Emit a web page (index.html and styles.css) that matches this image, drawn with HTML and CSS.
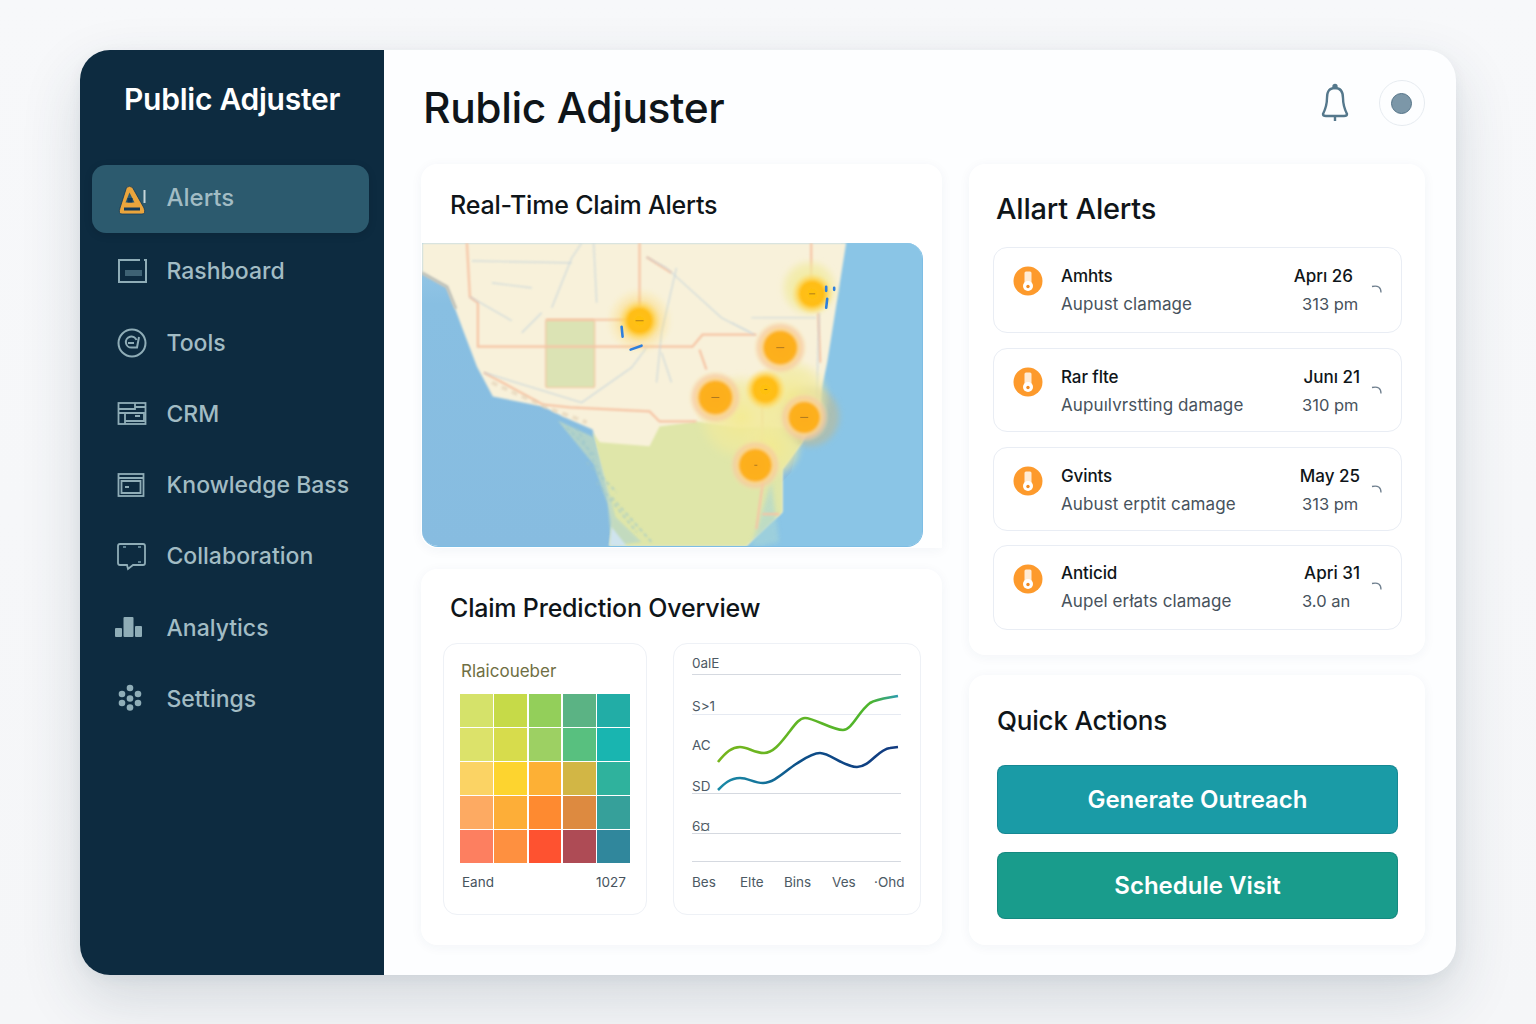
FILE: index.html
```html
<!DOCTYPE html>
<html lang="en">
<head>
<meta charset="utf-8">
<title>Public Adjuster</title>
<link rel="stylesheet" href="styles.css">
</head>
<body>
<div class="app">
  <aside class="sidebar">
    <div class="brand">Public Adjuster</div>
    <nav class="nav">
      <a class="nav-item active">
        <svg class="nav-icon icon-alert" viewBox="0 0 30 30" fill="none"><path d="M9.500 2.500 Q12.500 0 15.500 2.500 L27 23 Q29 29 25 29 H5 Q1 29 3 23 Z" fill="#eaa53c" stroke="#123a5a" stroke-width=".8"/><path d="M12.500 7.500 L17.500 17.500 H8.500 Z" fill="#2c5a6e"/><rect x="10.500" y="13" width="5" height="4.500" fill="#123a5a"/><rect x="7" y="22.500" width="16" height="3" fill="#123a5a"/><path d="M27.500 5 V18" stroke="#c6d6da" stroke-width="2"/></svg>
        <span class="nav-label-active">Alerts</span>
      </a>
      <a class="nav-item">
        <svg class="nav-icon" viewBox="0 0 30 30" fill="none" stroke="#8fadb7" stroke-width="2"><path d="M23 4 H2 V26 H29 V4 H27"/><rect x="8" y="14" width="17" height="6" fill="#3e6274" stroke="none"/></svg>
        <span>Rashboard</span>
      </a>
      <a class="nav-item">
        <svg class="nav-icon" viewBox="0 0 30 30" fill="none" stroke="#8fadb7" stroke-width="2"><circle cx="15" cy="15" r="13.500"/><path d="M22 9 L20 19.500 H14.500 A5.500 5.500 0 1 1 19.500 12"/><path d="M11 15 H17"/></svg>
        <span>Tools</span>
      </a>
      <a class="nav-item">
        <svg class="nav-icon" viewBox="0 0 30 30" fill="none" stroke="#8fadb7" stroke-width="1.800"><rect x="1.500" y="4" width="27" height="21"/><path d="M1.500 10 H18 V4 M18 8 H28.500 M1.500 14 H8 M8 25 V14 H27 V22 H8 M18 17 h5"/></svg>
        <span>CRM</span>
      </a>
      <a class="nav-item">
        <svg class="nav-icon" viewBox="0 0 30 30" fill="none" stroke="#8fadb7" stroke-width="1.800"><rect x="1.500" y="4" width="25" height="22"/><path d="M1.500 8 H26.500 M4.500 11 H23.500 V23 H4.500 Z"/><path d="M8 17 h4" stroke-width="2"/></svg>
        <span>Knowledge Bass</span>
      </a>
      <a class="nav-item">
        <svg class="nav-icon" viewBox="0 0 30 30" fill="none" stroke="#8fadb7" stroke-width="1.800"><path d="M3 3 H26 Q28 3 28 5 V22 Q28 24 26 24 H16 L11 28 L10 24 H3 Q1 24 1 22 V5 Q1 3 3 3 Z"/><path d="M6 6 h3 M21 6 h3 M21 21 h3" stroke="#5d8090"/></svg>
        <span>Collaboration</span>
      </a>
      <a class="nav-item">
        <svg class="nav-icon icon-shift" viewBox="0 0 30 30" fill="#8fadb7"><rect x="0" y="15" width="7" height="9" rx="1"/><rect x="8.500" y="4" width="10" height="20" rx="1"/><rect x="20" y="13" width="7" height="11" rx="1"/></svg>
        <span>Analytics</span>
      </a>
      <a class="nav-item">
        <svg class="nav-icon" viewBox="0 0 30 30" fill="#8fadb7"><circle cx="13" cy="4" r="3.300"/><circle cx="5" cy="10" r="3.300"/><circle cx="21" cy="10" r="3.300"/><circle cx="13" cy="14.500" r="3.300"/><circle cx="5" cy="19" r="3.300"/><circle cx="21" cy="19" r="3.300"/><circle cx="13" cy="23.500" r="3.300"/></svg>
        <span>Settings</span>
      </a>
    </nav>
  </aside>

  <main class="main">
    <header class="topbar">
      <h1 class="page-title">Rublic Adjuster</h1>
      <div class="top-actions">
        <svg class="bell" viewBox="0 0 30 40" fill="none" stroke="#55788c" stroke-width="2.400" stroke-linejoin="round"><path d="M15 5 C8 5 7 10 7 15 C7 22 5 27 3 31 Q3 33 6 33 H24 Q27 33 27 31 C25 27 23 22 23 15 C23 10 22 5 15 5 Z"/><circle cx="15" cy="3.500" r="1.500" fill="#55788c"/><path d="M15 33 V38"/></svg>
        <div class="avatar"><span class="avatar-dot"></span></div>
      </div>
    </header>

    <div class="columns">
      <div class="col col-left">
        <section class="card map-card">
          <h2 class="card-title">Real-Time Claim Alerts</h2>
          <div class="map">
            <svg viewBox="0 0 501 304" preserveAspectRatio="none">
              <defs>
                <radialGradient id="hotA"><stop offset="0" stop-color="#ffc20e"/><stop offset=".55" stop-color="#ffbd16"/><stop offset=".72" stop-color="#ffd04a" stop-opacity=".75"/><stop offset="1" stop-color="#ffe27a" stop-opacity="0"/></radialGradient>
                <radialGradient id="hotB"><stop offset="0" stop-color="#fdae1b"/><stop offset=".58" stop-color="#fdb020"/><stop offset=".68" stop-color="#fbd58e" stop-opacity=".9"/><stop offset=".82" stop-color="#f7c9a0" stop-opacity=".7"/><stop offset="1" stop-color="#f6e2a0" stop-opacity="0"/></radialGradient>
                <radialGradient id="glow"><stop offset="0" stop-color="#f3ea90" stop-opacity=".95"/><stop offset=".7" stop-color="#f1ea9c" stop-opacity=".65"/><stop offset="1" stop-color="#f1ea9c" stop-opacity="0"/></radialGradient>
                <linearGradient id="sea" x1="0" x2="0" y1="0" y2="1"><stop offset="0" stop-color="#9ccbe8"/><stop offset=".2" stop-color="#88bfe2"/><stop offset="1" stop-color="#87bce0"/></linearGradient>
                <filter id="soft" x="-10%" y="-10%" width="120%" height="120%"><feGaussianBlur stdDeviation="1"/></filter>
                <filter id="softmid" x="-10%" y="-10%" width="120%" height="120%"><feGaussianBlur stdDeviation="2"/></filter>
                <filter id="softer" x="-20%" y="-20%" width="140%" height="140%"><feGaussianBlur stdDeviation="3"/></filter>
                <filter id="hot" x="-20%" y="-20%" width="140%" height="140%"><feGaussianBlur stdDeviation=".9"/></filter>
              </defs>
              <rect width="501" height="304" fill="url(#sea)"/>
              <path d="M300 304 L370 230 L420 0 H501 V304 Z" fill="#8ac5e6"/>
              <path d="M0 0 H425 L406 120 L401 144 L398 174 L381 200 L361 227 L361 270 L325 304 H188 L191 280 L185 247 L171 187 L141 174 L121 164 L71 154 L55 124 L41 87 L25 44 L0 30 Z" fill="#f8f1da" filter="url(#soft)"/>
              <path d="M0 30 L25 44 L34 66" fill="none" stroke="#c4c3b8" stroke-width="3" filter="url(#soft)"/>
              <path d="M171 190 L178 200 L228 204 L238 184 L275 179 L315 185 L380 185 L381 200 L361 227 L361 270 L325 304 H188 L191 280 L185 247 Z" fill="#dfe6a9" filter="url(#soft)"/>
              <path d="M350 240 L358 300 L340 304 L330 304 Z" fill="#a9d6d6" opacity=".6" filter="url(#softmid)"/>
              <path d="M136 178 L172 195 L186 245 L194 275 L220 300 L190 304 L186 262 L172 222 Z" fill="#bcd8c4" opacity=".8" filter="url(#soft)"/>
              <path d="M145 185 L175 215 M155 185 L180 235 M165 220 L195 250 M175 240 L215 290 M190 255 L230 300" fill="none" stroke="#98c4cc" stroke-width="2" stroke-dasharray="4 3" opacity=".6" filter="url(#soft)"/>
              <path d="M190 285 L188 304 H205 Z" fill="#cfe4ee" filter="url(#soft)"/>
              <rect x="124" y="77" width="49" height="68" rx="2" fill="#dbe3b4" stroke="#f4c4a0" stroke-width="1.200" filter="url(#soft)"/>
              <g fill="none" stroke="#f6c4a4" stroke-width="2.200" filter="url(#soft)">
                <path d="M45 0 L48 54 L56 60 L56 104 H271 L281 92 H335"/>
                <path d="M218 0 V64"/>
                <path d="M124 77 H218"/>
                <path d="M62 130 L121 162 L148 165 L228 169 L238 179 H275"/>
                <path d="M278 107 L285 127"/>
                <path d="M341 164 L341 204 L341 244 L335 287"/>
                <path d="M390 0 V37"/>
                <path d="M225 14 L250 30"/>
                <path d="M397 70 L399 120 M341 272 H358"/>
              </g>
              <g fill="none" stroke="#c4d3dc" stroke-width="1.200" opacity=".85" filter="url(#soft)">
                <path d="M225 14 L245 25 L300 75 L333 92"/>
                <path d="M130 65 L150 15 L160 0 M48 54 L90 78 M50 18 L150 20 M70 40 L110 45"/>
                <path d="M62 130 L160 160 L210 125 L225 105"/>
                <path d="M172 0 L175 60 M255 25 L240 90 L235 140 M330 75 H395 M398 70 L395 170"/>
                <path d="M240 110 L250 140 M310 80 L330 90 M100 90 L120 70"/>
              </g>
              <path d="M70 140 L125 165 L165 180" fill="none" stroke="#e0ccb0" stroke-width="4" stroke-dasharray="6 5" opacity=".55" filter="url(#soft)"/>
              <circle cx="388" cy="174" r="30" fill="#c4b98c" opacity=".55" filter="url(#softer)"/>
              <g filter="url(#softmid)">
                <circle cx="320" cy="175" r="45" fill="url(#glow)"/>
                <circle cx="370" cy="155" r="40" fill="url(#glow)"/>
                <circle cx="350" cy="205" r="32" fill="url(#glow)"/>
                <circle cx="388" cy="45" r="30" fill="url(#glow)"/>
              </g>
              <g filter="url(#hot)">
                <circle cx="218" cy="78" r="34" fill="url(#hotA)" opacity=".28"/>
                <circle cx="218" cy="78" r="21" fill="url(#hotA)"/>
                <circle cx="391" cy="51" r="21" fill="url(#hotA)"/>
                <circle cx="344" cy="147" r="21" fill="url(#hotA)"/>
                <circle cx="359" cy="105" r="27" fill="url(#hotB)"/>
                <circle cx="294" cy="155" r="27" fill="url(#hotB)"/>
                <circle cx="383" cy="175" r="25" fill="url(#hotB)"/>
                <circle cx="334" cy="223" r="26" fill="url(#hotB)"/>
              </g>
              <g stroke="#2e7fdc" stroke-width="2.600" stroke-linecap="round">
                <path d="M200 84 L201 94 M209 107 L220 103"/>
                <path d="M405 44 V48 M413 45 V47 M406 56 L405 65"/>
              </g>
              <g stroke="#9a6a20" stroke-width="1" opacity=".8">
                <path d="M214 78 H222 M355 105 H363 M290 155 H298 M379 175 H387 M388 51 H394 M343 147 H346 M333 223 H336"/>
              </g>
            </svg>
          </div>
        </section>

        <section class="card overview-card">
          <h2 class="card-title">Claim Prediction Overview</h2>
          <div class="overview-grid">
            <div class="subcard heat-card">
              <div class="heat-title">Rlaicoueber</div>
              <div class="heat">
                <i class="h11"></i><i class="h12"></i><i class="h13"></i><i class="h14"></i><i class="h15"></i>
                <i class="h21"></i><i class="h22"></i><i class="h23"></i><i class="h24"></i><i class="h25"></i>
                <i class="h31"></i><i class="h32"></i><i class="h33"></i><i class="h34"></i><i class="h35"></i>
                <i class="h41"></i><i class="h42"></i><i class="h43"></i><i class="h44"></i><i class="h45"></i>
                <i class="h51"></i><i class="h52"></i><i class="h53"></i><i class="h54"></i><i class="h55"></i>
              </div>
              <div class="heat-foot"><span>Eand</span><span>1027</span></div>
            </div>
            <div class="subcard chart-card">
              <svg class="chart" viewBox="0 0 246 269">
                <defs>
                  <linearGradient id="lineG" x1="0" x2="1" y1="0" y2="0"><stop offset="0" stop-color="#76b51c"/><stop offset=".85" stop-color="#4db52d"/><stop offset="1" stop-color="#2a9bb0"/></linearGradient>
                  <linearGradient id="lineB" x1="0" x2="1" y1="0" y2="0"><stop offset="0" stop-color="#1a8aa6"/><stop offset=".25" stop-color="#14739a"/><stop offset=".45" stop-color="#0c4f88"/><stop offset="1" stop-color="#123a80"/></linearGradient>
                </defs>
                <g class="grid-lines">
                  <path d="M18 30.500 H227"/><path d="M18 70.500 H227" class="faint"/><path d="M18 149.500 H227"/><path d="M18 189.500 H227"/><path d="M18 217.500 H227"/>
                </g>
                <g class="chart-label">
                  <text x="18" y="24">0alE</text>
                  <text x="18" y="67">S&gt;1</text>
                  <text x="18" y="106">AC</text>
                  <text x="18" y="147">SD</text>
                  <text x="18" y="187">6¤</text>
                  <text x="18" y="243">Bes</text>
                  <text x="66" y="243">Elte</text>
                  <text x="110" y="243">Bins</text>
                  <text x="158" y="243">Ves</text>
                  <text x="200" y="243">·Ohd</text>
                </g>
                <path d="M44 118 C52 108 58 103 66 103 C74 103 80 109 90 109 C100 109 108 97 116 87 C122 79 126 74 131 74 C140 74 158 86 169 86 C178 86 184 68 196 59 C203 55 214 54 224 52" fill="none" stroke="url(#lineG)" stroke-width="2.600"/>
                <path d="M44 146 C50 140 56 134 66 134 C74 134 80 139 89 139 C100 139 110 128 122 120 C130 115 138 109 146 109 C156 109 170 123 183 123 C196 123 204 105 216 104 L224 103" fill="none" stroke="url(#lineB)" stroke-width="2.600"/>
              </svg>
            </div>
          </div>
        </section>
      </div>

      <div class="col col-right">
        <section class="card alerts-card">
          <h2 class="card-title title-lg">Allart Alerts</h2>
          <ul class="alert-list">
            <li class="alert alert-a">
              <svg class="alert-icon" viewBox="0 0 30 30"><circle cx="15" cy="15" r="14.500" fill="#fd9a2c"/><path d="M11.500 7 Q11.500 5.500 13 5.500 H17 Q18.500 5.500 18.500 7 V17 H11.500 Z" fill="#fff" opacity=".8"/><circle cx="15" cy="20" r="5" fill="#fff"/><circle cx="15" cy="20.500" r="1.700" fill="#f08a20"/></svg>
              <div class="alert-body"><div class="alert-name">Amhts</div><div class="alert-sub">Aupust clamage</div></div>
              <div class="alert-when"><div class="alert-date date-first">Aprı 26</div><div class="alert-time">313 pm</div></div>
              <svg class="alert-chev" viewBox="0 0 12 12" fill="none" stroke="#6f7f8e" stroke-width="1.300"><path d="M1 2.500 Q10 0.500 10 8.500"/></svg>
            </li>
            <li class="alert">
              <svg class="alert-icon" viewBox="0 0 30 30"><circle cx="15" cy="15" r="14.500" fill="#fd9a2c"/><path d="M11.500 7 Q11.500 5.500 13 5.500 H17 Q18.500 5.500 18.500 7 V17 H11.500 Z" fill="#fff" opacity=".8"/><circle cx="15" cy="20" r="5" fill="#fff"/><circle cx="15" cy="20.500" r="1.700" fill="#f08a20"/></svg>
              <div class="alert-body"><div class="alert-name">Rar flte</div><div class="alert-sub">Aupuılvrstting damage</div></div>
              <div class="alert-when"><div class="alert-date">Junı 21</div><div class="alert-time">310 pm</div></div>
              <svg class="alert-chev" viewBox="0 0 12 12" fill="none" stroke="#6f7f8e" stroke-width="1.300"><path d="M1 2.500 Q10 0.500 10 8.500"/></svg>
            </li>
            <li class="alert">
              <svg class="alert-icon" viewBox="0 0 30 30"><circle cx="15" cy="15" r="14.500" fill="#fd9a2c"/><path d="M11.500 7 Q11.500 5.500 13 5.500 H17 Q18.500 5.500 18.500 7 V17 H11.500 Z" fill="#fff" opacity=".8"/><circle cx="15" cy="20" r="5" fill="#fff"/><circle cx="15" cy="20.500" r="1.700" fill="#f08a20"/></svg>
              <div class="alert-body"><div class="alert-name">Gvints</div><div class="alert-sub">Aubust erptit camage</div></div>
              <div class="alert-when"><div class="alert-date">May 25</div><div class="alert-time">313 pm</div></div>
              <svg class="alert-chev" viewBox="0 0 12 12" fill="none" stroke="#6f7f8e" stroke-width="1.300"><path d="M1 2.500 Q10 0.500 10 8.500"/></svg>
            </li>
            <li class="alert alert-d">
              <svg class="alert-icon" viewBox="0 0 30 30"><circle cx="15" cy="15" r="14.500" fill="#fd9a2c"/><path d="M11.500 7 Q11.500 5.500 13 5.500 H17 Q18.500 5.500 18.500 7 V17 H11.500 Z" fill="#fff" opacity=".8"/><circle cx="15" cy="20" r="5" fill="#fff"/><circle cx="15" cy="20.500" r="1.700" fill="#f08a20"/></svg>
              <div class="alert-body"><div class="alert-name">Anticid</div><div class="alert-sub">Aupel erłats clamage</div></div>
              <div class="alert-when"><div class="alert-date">Apri 31</div><div class="alert-time">3.0 an</div></div>
              <svg class="alert-chev" viewBox="0 0 12 12" fill="none" stroke="#6f7f8e" stroke-width="1.300"><path d="M1 2.500 Q10 0.500 10 8.500"/></svg>
            </li>
          </ul>
        </section>

        <section class="card actions-card">
          <h2 class="card-title title-md">Quick Actions</h2>
          <button class="btn btn-blue">Generate Outreach</button>
          <button class="btn btn-green">Schedule Visit</button>
        </section>
      </div>
    </div>
  </main>
</div>
</body>
</html>
```

FILE: styles.css
```css
* { box-sizing: border-box; }
html, body { margin: 0; height: 100%; }
body {
  width: 1536px;
  height: 1024px;
  overflow: hidden;
  padding: 50px 80px 49px;
  background: linear-gradient(180deg, #f7f8fa 0%, #f5f6f8 100%);
  font-family: Inter, "Liberation Sans", sans-serif;
  color: #10181f;
}
.app {
  display: flex;
  width: 1376px;
  height: 925px;
  border-radius: 30px;
  background: #fdfeff;
  box-shadow: 0 24px 60px rgba(40, 60, 80, .16), 0 4px 14px rgba(40, 60, 80, .06);
  overflow: hidden;
}

/* Sidebar */
.sidebar {
  flex: 0 0 304px;
  background: #0d2b40;
  padding: 0 15px 0 12px;
}
.brand {
  height: 98px;
  margin-bottom: 17px;
  padding-left: 32px;
  display: flex;
  align-items: center;
  color: #fff;
  font-size: 30px;
  font-weight: 600;
  letter-spacing: -.25px;
}
.nav { display: flex; flex-direction: column; gap: 3.300px; }
.nav-item {
  display: flex;
  align-items: center;
  gap: 19.500px;
  height: 68px;
  padding-left: 25px;
  padding-bottom: 4px;
  border-radius: 14px;
  color: #a2bcc4;
  font-size: 23px;
  font-weight: 500;
}
.nav-item.active {
  background: #2c5a6e;
  margin-bottom: 3px;
  box-shadow: 0 2px 8px rgba(0, 0, 0, .12);
}
.nav-label-active { font-size: 24px; }
.nav-icon { width: 30px; height: 30px; flex: none; }
.icon-alert { margin-top: 6px; }
.icon-shift { margin-left: -2px; margin-right: 2px; }

/* Main */
.main {
  flex: 1;
  min-width: 0;
  display: flex;
  flex-direction: column;
  padding: 0 31px 30px 37px;
}
.topbar {
  height: 114px;
  display: flex;
  align-items: center;
  justify-content: space-between;
  padding-left: 2px;
}
.page-title {
  margin: 1px 0 0;
  font-size: 42.500px;
  font-weight: 500;
  letter-spacing: -.4px;
  color: #0f1519;
}
.top-actions { display: flex; align-items: center; gap: 29px; margin-top: -8px; }
.bell { width: 30px; height: 40px; }
.avatar {
  width: 46px;
  height: 46px;
  border-radius: 50%;
  border: 1.500px solid #e6ebf0;
  display: flex;
  align-items: center;
  justify-content: center;
}
.avatar-dot {
  width: 21px;
  height: 21px;
  margin-right: 2px;
  border-radius: 50%;
  background: #7c97a8;
  border: 1px solid #557488;
}
.columns {
  flex: 1;
  display: grid;
  grid-template-columns: 521px 456px;
  gap: 27px;
  min-height: 0;
}
.col { display: flex; flex-direction: column; }
.col-left { gap: 21px; }
.col-right { gap: 20px; }
.card {
  background: #fff;
  border-radius: 16px;
  box-shadow: 0 2px 12px rgba(40, 60, 90, .05);
}
.card-title {
  margin: 0;
  font-size: 25px;
  font-weight: 500;
  letter-spacing: -.2px;
  color: #0f1519;
}

/* Map */
.map-card { height: 384px; padding: 25px 19px 1px 1px; display: flex; flex-direction: column; border-radius: 16px 16px 0 16px; }
.map-card .card-title { padding-left: 28px; margin-bottom: 22px; line-height: 32px; }
.map {
  flex: 1;
  min-height: 0;
  border-radius: 0 16px 16px 16px;
  overflow: hidden;
  border: 1px solid #7dbde4;
  border-top: 0;
  border-left: 0;
}
.map svg { display: block; width: 100%; height: 100%; }

/* Overview */
.overview-card { height: 376px; padding: 23px 21px 30px 22px; display: flex; flex-direction: column; }
.overview-card .card-title { padding-left: 7px; line-height: 32px; margin-bottom: 19px; }
.overview-grid { flex: 1; display: grid; grid-template-columns: 204px 248px; gap: 26px; min-height: 0; }
.subcard {
  border: 1px solid #eef1f6;
  border-radius: 14px;
  background: #fff;
}
.heat-card { padding: 17px 16px 0 16px; }
.heat-title { font-size: 17px; line-height: 20px; color: #6f6f44; margin: 0 0 13px 1px; }
.heat {
  display: grid;
  grid-template-columns: repeat(5, 1fr);
  grid-template-rows: repeat(5, 1fr);
  gap: 1.500px;
  width: 170px;
  height: 169px;
}
.heat i { display: block; }
.h11 { background: #d5e26a; } .h12 { background: #c6da48; } .h13 { background: #93cf5a; } .h14 { background: #5bb384; } .h15 { background: #22ada6; }
.h21 { background: #dce26a; } .h22 { background: #d7dc4c; } .h23 { background: #9dd063; } .h24 { background: #58c07f; } .h25 { background: #19b5b0; }
.h31 { background: #fbd364; } .h32 { background: #fdd42f; } .h33 { background: #fdb035; } .h34 { background: #d2b645; } .h35 { background: #2fb29d; }
.h41 { background: #fdaa62; } .h42 { background: #fdae38; } .h43 { background: #fe8a30; } .h44 { background: #dd8a40; } .h45 { background: #36a09a; }
.h51 { background: #fd7f60; } .h52 { background: #fe9040; } .h53 { background: #fe5230; } .h54 { background: #ae4b55; } .h55 { background: #30879c; }
.heat-foot {
  display: flex;
  justify-content: space-between;
  width: 164px;
  margin: 11px 0 0 2px;
  font-size: 13.500px;
  line-height: 16px;
  color: #46535d;
}
.chart { display: block; width: 246px; height: 269px; }
.grid-lines path { stroke: #d5d9e0; stroke-width: 1; fill: none; }
.grid-lines .faint { stroke: #e6eaf2; }
.chart-label text { font-family: Inter, "Liberation Sans", sans-serif; font-size: 13.500px; fill: #4c5964; }

/* Alerts */
.alerts-card { height: 491px; padding: 27px 23px 0 24px; }
.title-lg { font-size: 29px; line-height: 36px; padding-left: 3px; margin-bottom: 20px; }
.alert-list { list-style: none; margin: 0; padding: 0; display: flex; flex-direction: column; gap: 14.500px; }
.alert {
  display: flex;
  align-items: flex-start;
  height: 84.500px;
  padding: 17px 18px 0 19px;
  border: 1px solid #e9edf4;
  border-radius: 14px;
  background: #fff;
}
.alert-a { height: 86px; }
.alert-d { height: 85px; padding-top: 16px; margin-top: -.5px; }
.alert-icon { width: 30px; height: 30px; flex: none; margin-top: 1px; }
.alert-d .alert-icon { margin-top: 2px; }
.alert-body { flex: 1; min-width: 0; margin-left: 18px; }
.alert-name { font-size: 17px; line-height: 22px; font-weight: 500; color: #0f1519; letter-spacing: -.1px; }
.alert-sub { font-size: 17px; line-height: 22px; margin-top: 6px; color: #47525c; letter-spacing: .1px; }
.alert-when { width: 58px; margin-right: 10px; flex: none; }
.alert-date { font-size: 17px; line-height: 22px; font-weight: 500; color: #0f1519; white-space: nowrap; display: flex; justify-content: flex-end; }
.date-first { margin-right: 7px; }
.alert-time { font-size: 16.500px; line-height: 22px; margin-top: 6px; color: #47525c; white-space: nowrap; }
.alert-chev { width: 12px; height: 12px; flex: none; margin-top: 19px; margin-left: 1px; }

/* Actions */
.actions-card { height: 270px; padding: 28px 27px 0 28px; display: flex; flex-direction: column; }
.title-md { font-size: 26px; line-height: 36px; margin-bottom: 26px; }
.btn {
  border: 1px solid rgba(10, 80, 90, .25);
  border-radius: 8px;
  color: #fff;
  font-family: Inter, "Liberation Sans", sans-serif;
  font-size: 24px;
  font-weight: 600;
  width: 401px;
}
.btn-blue { height: 69px; background: #1a9ba6; margin-bottom: 18px; }
.btn-green { height: 67px; background: #199c8c; }
```
